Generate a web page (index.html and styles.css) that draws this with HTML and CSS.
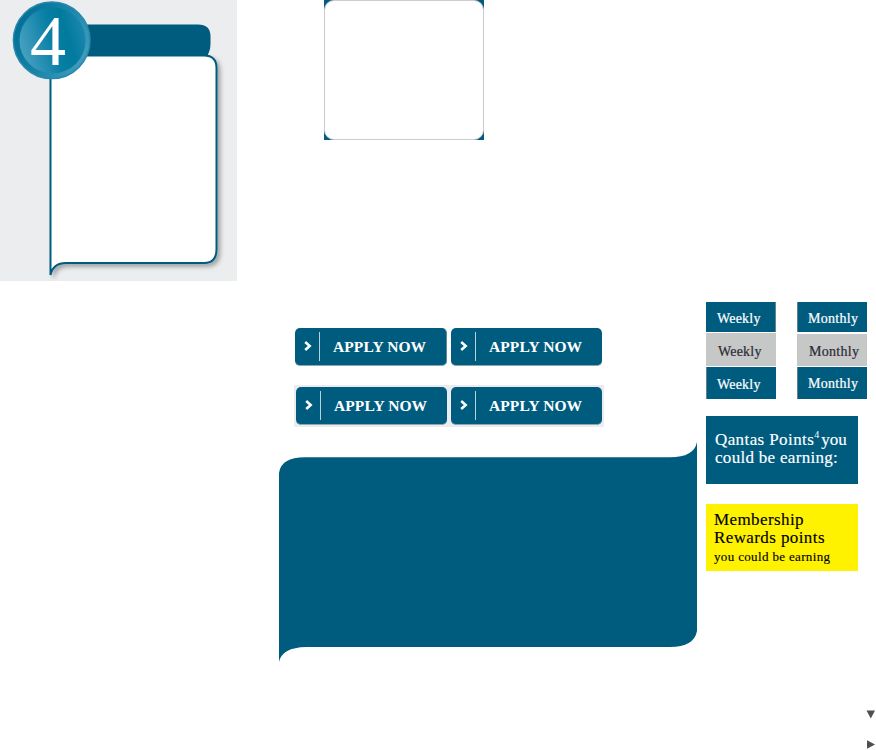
FILE: index.html
```html
<!DOCTYPE html>
<html lang="en">
<head>
<meta charset="utf-8">
<title>Card components</title>
<link rel="stylesheet" href="styles.css">
</head>
<body>
<main class="sheet">
  <section class="step">
    <svg width="237" height="281" viewBox="0 0 237 281" aria-label="Step 4">
      <defs>
        <linearGradient id="rim" x1="0" y1="0.25" x2="1" y2="0.75">
          <stop offset="0" stop-color="#006d94"/><stop offset="0.5" stop-color="#1784a8"/><stop offset="1" stop-color="#469dbf"/>
        </linearGradient>
        <linearGradient id="disc" x1="0" y1="0.65" x2="1" y2="0.35">
          <stop offset="0" stop-color="#4aa2c3"/><stop offset="0.5" stop-color="#087fa5"/><stop offset="0.72" stop-color="#007a9d"/><stop offset="1" stop-color="#1c88ae"/>
        </linearGradient>
        <filter id="shadow" x="-10%" y="-10%" width="125%" height="125%">
          <feDropShadow dx="3" dy="3" stdDeviation="2" flood-color="#000" flood-opacity="0.3"/>
        </filter>
      </defs>
      <path d="M60 24.500H198Q210.500 24.500 210.500 36.500V44Q210.500 51 206 58H60Z" fill="#005c7f"/>
      <path d="M50.500 55.500H204Q216.500 55.500 216.500 68V249Q216.500 263 204 263H66Q53 263 50.500 275Z" fill="#fff" stroke="#005c7f" stroke-width="2" filter="url(#shadow)"/>
      <circle cx="51.700" cy="40.300" r="38.300" fill="url(#rim)" stroke="#2688ad" stroke-width="1.500"/>
      <circle cx="52.500" cy="40.300" r="33" fill="url(#disc)"/>
      <text class="numeral" x="30" y="65">4</text>
    </svg>
  </section>

  <section class="middle">
    <div class="frame"><div class="frame-inner"></div></div>
    <div class="actions plain">
      <a class="button shaded"><svg class="chevron" viewBox="0 0 8 10"><path d="M1.200 1L5.700 5L1.200 9"/></svg><span>APPLY NOW</span></a>
      <a class="button"><svg class="chevron" viewBox="0 0 8 10"><path d="M1.200 1L5.700 5L1.200 9"/></svg><span>APPLY NOW</span></a>
    </div>
    <div class="actions tinted">
      <a class="button"><svg class="chevron" viewBox="0 0 8 10"><path d="M1.200 1L5.700 5L1.200 9"/></svg><span>APPLY NOW</span></a>
      <a class="button"><svg class="chevron" viewBox="0 0 8 10"><path d="M1.200 1L5.700 5L1.200 9"/></svg><span>APPLY NOW</span></a>
    </div>
    <svg class="banner" width="418" height="220" viewBox="0 0 418 220">
      <path d="M0 220V31Q2 15.300 26 15.300H391Q415 15.300 418 0V189Q415 205 391 205H27Q3 205.500 0 220Z" fill="#005c7f"/>
    </svg>
  </section>

  <section class="side">
    <div class="tabs">
      <div class="tab-column weekly">
        <span class="tab edge-right">Weekly</span>
        <span class="tab off">Weekly</span>
        <span class="tab edge-left last">Weekly</span>
      </div>
      <div class="tab-column monthly">
        <span class="tab edge-left">Monthly</span>
        <span class="tab off">Monthly</span>
        <span class="tab edge-left last">Monthly</span>
      </div>
    </div>
    <div class="points qantas">
      <p><span>Qantas Points</span><sup>4</sup><span class="you">you</span></p>
      <p class="second">could be earning:</p>
    </div>
    <div class="points rewards">
      <p>Membership</p>
      <p>Rewards points</p>
      <p class="small">you could be earning</p>
    </div>
    <div class="arrows">
      <svg width="10" height="9" viewBox="0 0 10 9"><path d="M0.500 0.500H9L4.800 8.500Z"/></svg>
      <svg width="10" height="9" viewBox="0 0 10 9"><path d="M1 0.300L9 4.500L1 8.700Z"/></svg>
    </div>
  </section>
</main>
</body>
</html>
```
FILE: styles.css
```css
* { box-sizing: border-box; }
body { margin: 0; background: #fff; font-family: "Liberation Serif", serif; }
p { margin: 0; }
svg { display: block; }
.sheet { display: grid; grid-template-columns: 279px 427px 170px; width: 876px; height: 750px; overflow: hidden; }

.step { width: 237px; height: 281px; background: #ecedef; }
.numeral { font-size: 72px; fill: #fff; }

.frame { width: 160px; height: 140px; margin-left: 45px; background: #005c7f; }
.frame-inner { height: 100%; background: #fff; border: 1px solid #ccc; border-radius: 10px; }

.actions { display: flex; height: 42px; }
.plain { gap: 4px; margin: 188px 0 0 16px; }
.tinted { gap: 4px; width: 310px; margin: 15px 0 0 15px; padding: 2px 0 0 2px; background: #ecebf0; }
.button { display: flex; align-items: center; flex: none; width: 151px; height: 38px; padding-left: 9px; background: #005c7f; border-radius: 5px; border-bottom: 1px solid #8ba8b3; }
.shaded { width: 152px; border-right: 1px solid #62899b; }
.tinted .button:first-child { width: 151px; }
.chevron { width: 8px; height: 10px; margin-top: -1px; fill: none; stroke: #fff; stroke-width: 2.5; }
.button span { display: flex; align-items: center; height: 29px; margin-left: 7px; padding: 1px 0 0 13px; border-left: 1px solid #b9d1db; color: #fff; font-size: 15.5px; font-weight: bold; letter-spacing: .1px; white-space: nowrap; }
.banner { margin-top: 15px; }

.tabs { display: flex; gap: 21px; height: 98px; margin-top: 302px; }
.tab-column { display: flex; flex-direction: column; gap: 1px; width: 70px; }
.tab { height: 30px; padding-left: 11px; background: #005c7f; color: #fff; font-size: 14px; line-height: 33px; letter-spacing: .2px; -webkit-text-stroke: .2px; }
.monthly .tab { letter-spacing: .3px; }
.tab.off { height: 33px; padding-left: 12px; background: #c6c7c7; color: #2b2b35; line-height: 37px; }
.monthly .off { height: 32px; margin-top: 1px; line-height: 36px; }
.tab.last { height: 32px; line-height: 35px; }
.monthly .last { line-height: 33px; }
.edge-left { box-shadow: inset 1px 0 #66808d; }
.edge-right { box-shadow: inset -1px 0 #66808d; }

.points { width: 152px; height: 68px; padding-left: 9px; font-size: 17px; line-height: 18px; letter-spacing: .4px; white-space: nowrap; -webkit-text-stroke: .15px; }
.qantas { margin-top: 16px; padding-top: 15px; background: #005c7f; color: #fff; }
.qantas p { display: flex; height: 18px; }
.qantas .second { letter-spacing: .3px; }
sup { width: 7px; font-size: 10px; line-height: 8px; letter-spacing: 0; vertical-align: baseline; -webkit-text-stroke: 0; }
.you { letter-spacing: 0; }
.rewards { height: 67px; margin-top: 20px; padding: 7px 0 0 8px; background: #fff200; color: #000; }
.rewards .small { font-size: 13px; line-height: 20px; letter-spacing: .35px; }

.arrows { display: flex; flex-direction: column; gap: 21px; margin: 139px 0 0 160px; fill: #4d5053; }
```
